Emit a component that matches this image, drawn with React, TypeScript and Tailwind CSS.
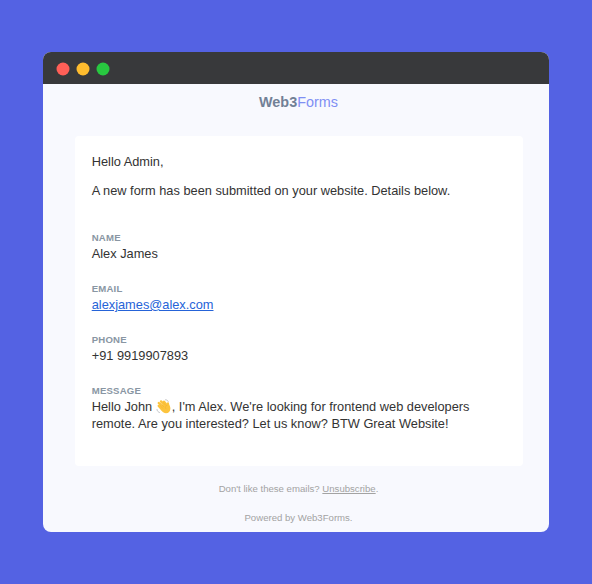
const fields = [
  { label: "NAME", value: "Alex James" },
  { label: "EMAIL", value: "alexjames@alex.com", link: true },
  { label: "PHONE", value: "+91 9919907893" },
];

function WindowDot({ color }: { color: string }) {
  return (
    <svg viewBox="0 0 14 14" className="size-3.5" aria-hidden="true">
      <circle cx="7" cy="7" r="6.5" fill={color} />
    </svg>
  );
}

function WavingHand() {
  return (
    <svg viewBox="0 0 30 30" className="mr-px inline-block h-[15px] w-[15px] align-[-3px]" aria-hidden="true">
      <g stroke="#fcc43e" strokeWidth="4.8" strokeLinecap="round" fill="none">
        <path d="M5.5 14 13 22" />
        <path d="M5.5 8 15 18" />
        <path d="M10 4.8 19 15" />
        <path d="M16 5.5 23 14" />
      </g>
      <path
        d="M7 16 18 8l4.2 4.2c-.8-2.5-.2-5 1.4-5.5 1.7-.3 2.3 1 2.5 3 .3 2.6 2.7 5.3 2.7 9.3 0 6-4 9.5-8.8 9.5-4 0-6-2-8-4.5z"
        fill="#fcc43e"
      />
      <g stroke="#eda72c" strokeWidth=".8" strokeLinecap="round" fill="none">
        <path d="m7.5 12.5 6 6M8.5 8.5l7.5 7.5M14 6l5 6" />
        <path d="M22.2 12.2c-3 1.3-4 4-2.7 7" />
      </g>
      <g stroke="#8b8e94" strokeWidth="1" strokeLinecap="round" fill="none">
        <path d="M19 1.5c2.5 0 4.5 1.3 5.5 3.5" />
        <path d="M2 21c.3 3 2.2 5.2 5 6" />
      </g>
    </svg>
  );
}

function Label({ children }: { children: string }) {
  return (
    <div className="text-[9.6px] leading-[14px] font-bold tracking-[0.2px] text-[#8996a3]">{children}</div>
  );
}

export default function App() {
  return (
    <main className="h-[584px] w-[592px] bg-[#5462e3] pt-[52px] pl-[43px] font-['Liberation_Sans',Arial,sans-serif]">
      <section className="flex h-[480px] w-[506px] flex-col overflow-hidden rounded-lg bg-[#f8f9fe]">
        <header className="flex h-8 shrink-0 items-center gap-1.5 bg-[#38393b] pt-0.5 pl-[13px]">
          <WindowDot color="#ff5f57" />
          <WindowDot color="#febc2e" />
          <WindowDot color="#28c840" />
        </header>
        <h1 className="mt-[9px] pl-[5px] text-center text-[14.4px] leading-[18px] text-[#7f8ff4]">
          <span className="font-bold text-[#718096]">Web3</span>Forms
        </h1>
        <div className="mt-[25px] ml-[31.5px] h-[330px] w-[448px] shrink-0 rounded-sm bg-white px-[17.2px] pt-[17px] text-[12.8px] leading-[17px] text-[#333333]">
          <p>Hello Admin,</p>
          <p className="mt-3">A new form has been submitted on your website. Details below.</p>
          <dl className="mt-8 flex flex-col gap-5">
            {fields.map((field) => (
              <div key={field.label}>
                <Label>{field.label}</Label>
                {field.link ? (
                  <a className="block text-[#2563d8] underline">{field.value}</a>
                ) : (
                  <div>{field.value}</div>
                )}
              </div>
            ))}
            <div>
              <Label>MESSAGE</Label>
              <div className="h-[17px] whitespace-nowrap">
                Hello John <WavingHand />, I'm Alex. We're looking for frontend web developers
              </div>
              <div className="whitespace-nowrap">remote. Are you interested? Let us know? BTW Great Website!</div>
            </div>
          </dl>
        </div>
        <footer className="mt-[17px] pl-[5px] text-center text-[9.6px] leading-3 text-[#a3a3a3]">
          <p>
            Don't like these emails? <a className="underline">Unsubscribe</a>.
          </p>
          <p className="mt-[17px]">Powered by Web3Forms.</p>
        </footer>
      </section>
    </main>
  );
}
